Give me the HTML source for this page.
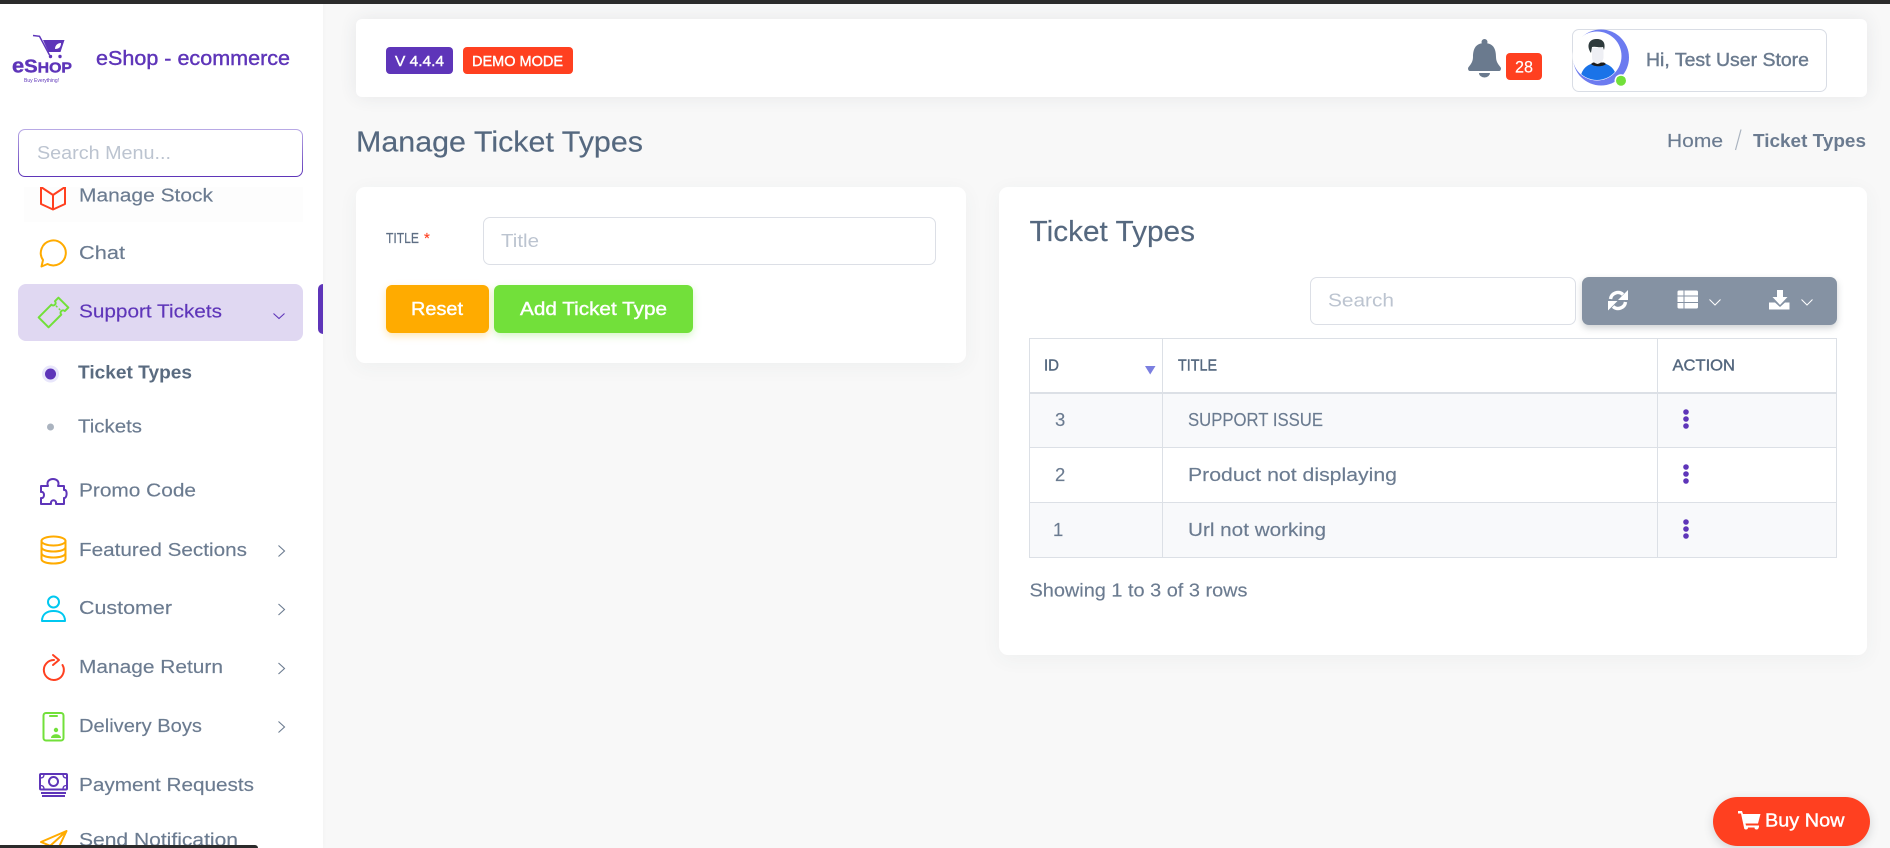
<!DOCTYPE html>
<html lang="en">
<head>
<meta charset="utf-8">
<title>Manage Ticket Types</title>
<style>
html,body{margin:0;padding:0;width:1890px;height:848px;overflow:hidden;background:#f8f8f8;font-family:"Liberation Sans",sans-serif}
.b{position:absolute;box-sizing:border-box}
svg{position:absolute;left:0;top:0}
text{font-family:"Liberation Sans",sans-serif;font-size:18.5px;color:#6b7b90;fill:currentColor;stroke:currentColor;stroke-width:.15px}
.m{stroke-width:.4px}
.w{color:#fff}
.p{color:#bcc4d0;stroke-width:0}
.bd{font-weight:700;stroke-width:0}
.nav{fill:none;stroke-width:2;stroke-linejoin:round;stroke-linecap:round}
.ch{fill:none;stroke:#6b7b90;stroke-width:1.1}
.th{font-size:15.8px;color:#55687f}
</style>
</head>
<body>
<!-- sidebar -->
<div class="b" style="left:0;top:0;width:323px;height:848px;background:#fff;box-shadow:0 0 6px rgba(0,0,0,.03)"></div>
<div class="b" style="left:24px;top:187px;width:279px;height:35px;background:#fdfdfd"></div>
<div class="b" style="left:18px;top:129px;width:285px;height:48px;border:1px solid transparent;border-radius:7px;background:linear-gradient(#fff,#fff) padding-box,linear-gradient(#b9aae6,#5e35b9) border-box"></div>
<div class="b" style="left:18px;top:284px;width:285px;height:57px;background:#e0d8f2;border-radius:8px"></div>
<div class="b" style="left:318px;top:284px;width:5px;height:50px;background:#5e35b9;border-radius:5px 0 0 5px"></div>
<!-- navbar -->
<div class="b" style="left:356px;top:19px;width:1511px;height:78px;background:#fff;border-radius:6px;box-shadow:0 0 18px rgba(60,70,80,.09)"></div>
<div class="b" style="left:386px;top:47px;width:67px;height:27px;background:#5e35b9;border-radius:4px"></div>
<div class="b" style="left:463px;top:47px;width:110px;height:27px;background:#ff4020;border-radius:4px"></div>
<div class="b" style="left:1506px;top:53px;width:36px;height:27px;background:#ff4020;border-radius:4px"></div>
<div class="b" style="left:1572px;top:29px;width:255px;height:63px;border:1px solid #d9dde5;border-radius:7px"></div>
<!-- form card -->
<div class="b" style="left:356px;top:187px;width:610px;height:176px;background:#fff;border-radius:9px;box-shadow:0 4px 20px rgba(60,70,80,.05)"></div>
<div class="b" style="left:483px;top:217px;width:453px;height:48px;background:#fff;border:1px solid #dcdfe6;border-radius:7px"></div>
<div class="b" style="left:386px;top:285px;width:103px;height:48px;background:#ffab00;border-radius:6px;box-shadow:0 3px 8px rgba(255,171,0,.3)"></div>
<div class="b" style="left:494px;top:285px;width:199px;height:48px;background:#72e03a;border-radius:6px;box-shadow:0 3px 8px rgba(114,224,58,.3)"></div>
<!-- table card -->
<div class="b" style="left:999px;top:187px;width:868px;height:468px;background:#fff;border-radius:9px;box-shadow:0 4px 20px rgba(60,70,80,.05)"></div>
<div class="b" style="left:1310px;top:277px;width:266px;height:48px;background:#fff;border:1px solid #dcdfe6;border-radius:7px"></div>
<div class="b" style="left:1582px;top:277px;width:255px;height:48px;background:#8592a3;border-radius:7px;box-shadow:0 3px 7px rgba(60,70,80,.25)"></div>
<!-- table -->
<div class="b" style="left:1029px;top:338px;width:808px;height:220px;border:1px solid #dce0e6;background:#fff"></div>
<div class="b" style="left:1030px;top:394px;width:806px;height:53px;background:#f8f9fb"></div>
<div class="b" style="left:1030px;top:503px;width:806px;height:54px;background:#f8f9fb"></div>
<div class="b" style="left:1030px;top:392px;width:806px;height:2px;background:#dce0e6"></div>
<div class="b" style="left:1030px;top:447px;width:806px;height:1px;background:#dce0e6"></div>
<div class="b" style="left:1030px;top:502px;width:806px;height:1px;background:#dce0e6"></div>
<div class="b" style="left:1162px;top:338px;width:1px;height:220px;background:#dce0e6"></div>
<div class="b" style="left:1657px;top:338px;width:1px;height:220px;background:#dce0e6"></div>
<!-- buy now -->
<div class="b" style="left:1713px;top:797px;width:157px;height:49px;background:#ff4020;border-radius:25px;box-shadow:0 3px 10px rgba(60,70,80,.2)"></div>

<svg width="1890" height="848" viewBox="0 0 1890 848" xmlns="http://www.w3.org/2000/svg">
<defs><clipPath id="mc"><rect x="0" y="187" width="323" height="661"/></clipPath>
<clipPath id="av"><circle cx="1597" cy="56" r="24"/></clipPath></defs>

<!-- logo -->
<g fill="#5e35b9">
<path d="M33 35.500l6.500.8L49.500 55" fill="none" stroke="#5e35b9" stroke-width="1.500"/>
<path d="M43 40H64.500L60.500 52H48.500Z"/>
<circle cx="50.500" cy="56.500" r="1.700"/><circle cx="60" cy="56.500" r="1.700"/>
<path d="M55 49c0-4 3-6 6-6 0 4-2 6-6 6z" fill="#fff"/>
</g>
<text x="12" y="72.700" textLength="60" lengthAdjust="spacingAndGlyphs" style="font-weight:700;font-size:20px;color:#5e35b9;stroke-width:.4px">e<tspan style="font-size:18.500px">S</tspan><tspan style="font-size:14.500px">HOP</tspan></text>
<text x="24" y="82" textLength="35" lengthAdjust="spacingAndGlyphs" style="font-size:5px;color:#5e35b9;stroke-width:0">Buy Everything!</text>
<text class="m" x="96" y="65" textLength="194" lengthAdjust="spacingAndGlyphs" style="font-size:20px;color:#5e35b9">eShop - ecommerce</text>

<!-- sidebar text -->
<text class="p" x="37" y="159" textLength="134" lengthAdjust="spacingAndGlyphs">Search Menu...</text>
<g clip-path="url(#mc)"><path class="nav" stroke="#ff4020" d="M41 187L53 195 65 187V204L53 209.500 41 204ZM53 195V209.500"/></g>
<text x="79" y="201.500" textLength="134" lengthAdjust="spacingAndGlyphs">Manage Stock</text>
<path class="nav" stroke="#ffab00" d="M41.500 266.500L43 260A12.500 12.500 0 1 1 47.500 264Z"/>
<text x="79" y="259" textLength="46" lengthAdjust="spacingAndGlyphs">Chat</text>

<g transform="translate(53.500 312.500) rotate(-45)" class="nav" stroke="#72e03a">
<path d="M-14-7H4a2.500 2.500 0 0 0 5 0H14V7H9a2.500 2.500 0 0 0-5 0H-14Z"/>
<path stroke-width="1.400" stroke-linecap="butt" stroke-dasharray="2 2" d="M6.500-3V4"/>
</g>
<text x="79" y="317.500" textLength="143" lengthAdjust="spacingAndGlyphs" style="color:#5e35b9">Support Tickets</text>
<path class="ch" style="stroke:#5e35b9" d="M273.500 313.500L279 318.500 284.500 313.500"/>

<circle cx="50.500" cy="374" r="8.500" fill="#e8e6fb"/><circle cx="50.500" cy="374" r="5.500" fill="#5e35b9"/>
<text class="bd" x="78" y="378.500" textLength="114" lengthAdjust="spacingAndGlyphs" style="color:#5a6b80">Ticket Types</text>
<circle cx="50.500" cy="427" r="3.500" fill="#aab3bf"/>
<text x="78" y="432.500" textLength="64" lengthAdjust="spacingAndGlyphs">Tickets</text>

<path class="nav" stroke="#5e35b9" d="M41 486H48C46 481 50 479 53 479C56 479 60 481 58 486H64V490C68 489 67 499 64 498V504H56C57 499 50 499 51 504H41V498C45 499 45 491 41 492Z"/>
<text x="79" y="496.500" textLength="117" lengthAdjust="spacingAndGlyphs">Promo Code</text>

<g class="nav" stroke="#ffab00"><ellipse cx="53.500" cy="541" rx="12" ry="4.500"/><path d="M41.500 541V559C41.500 565 65.500 565 65.500 559V541M41.500 547C41.500 553 65.500 553 65.500 547M41.500 553C41.500 559 65.500 559 65.500 553"/></g>
<text x="79" y="556" textLength="168" lengthAdjust="spacingAndGlyphs">Featured Sections</text>
<path class="ch" d="M278.500 545.500L284.500 551 278.500 556.500"/>

<g class="nav" stroke="#00c8f0"><circle cx="53.500" cy="602" r="5.500"/><path d="M42 621C42 614 47 611 53.500 611S65 614 65 621Z"/></g>
<text x="79" y="614" textLength="93" lengthAdjust="spacingAndGlyphs">Customer</text>
<path class="ch" d="M278.500 604L284.500 609.500 278.500 615"/>

<g class="nav" stroke="#ff4020"><path d="M54 660A10 10 0 1 0 62.500 665"/><path d="M53 655L59 660 53 665"/></g>
<text x="79" y="673" textLength="144" lengthAdjust="spacingAndGlyphs">Manage Return</text>
<path class="ch" d="M278.500 663L284.500 668.500 278.500 674"/>

<g class="nav" stroke="#72e03a"><rect x="43.500" y="713" width="20" height="27.500" rx="2.500"/><path d="M50 716H57"/></g>
<circle cx="56" cy="730" r="2.200" fill="#72e03a"/><path d="M51 738C51 733 61 733 61 738Z" fill="#72e03a"/>
<text x="79" y="732" textLength="123" lengthAdjust="spacingAndGlyphs">Delivery Boys</text>
<path class="ch" d="M278.500 721.500L284.500 727 278.500 732.500"/>

<g fill="none" stroke="#5e35b9" stroke-width="2"><rect x="40" y="774" width="27" height="15.500" rx="1"/><circle cx="53.500" cy="781.500" r="4.500"/><path d="M41 793H66M42 796H65"/><path d="M40 778c3 0 4-1 4-4M67 778c-3 0-4-1-4-4M40 785.500c3 0 4 1 4 4M67 785.500c-3 0-4 1-4 4" stroke-width="1.300"/></g>
<text x="79" y="791" textLength="175" lengthAdjust="spacingAndGlyphs">Payment Requests</text>

<path class="nav" stroke="#ffab00" d="M41 842L66.500 831 58 849ZM66.500 831L50 846V851"/>
<text x="79" y="846" textLength="159" lengthAdjust="spacingAndGlyphs">Send Notification</text>

<!-- navbar content -->
<text class="m w" x="395" y="66" textLength="49" lengthAdjust="spacingAndGlyphs" style="font-size:15px">V 4.4.4</text>
<text class="m w" x="472" y="66" textLength="91" lengthAdjust="spacingAndGlyphs" style="font-size:15px">DEMO MODE</text>
<g fill="#6a7a8e"><circle cx="1484.500" cy="42" r="3"/><path d="M1484.500 43C1475 43 1473 50 1473 57C1473 63 1469 66 1468 68Q1468 71 1470 71H1499Q1501 71 1501 68C1500 66 1496 63 1496 57C1496 50 1494 43 1484.500 43Z"/><path d="M1479 73H1490A5.500 4.500 0 0 1 1479 73Z"/></g>
<text class="w" x="1515" y="72.500" textLength="18" lengthAdjust="spacingAndGlyphs" style="font-size:16.500px">28</text>

<circle cx="1601" cy="57.500" r="28" fill="#6c7bf0"/>
<circle cx="1597" cy="56" r="24.500" fill="#fff"/>
<g clip-path="url(#av)">
<path d="M1580 82C1580 70 1587 64.500 1593 63.500H1604C1610 64.500 1617 70 1617 82Z" fill="#1a73e8"/>
<path d="M1591 64C1594 67 1603 67 1606 64L1604 62.500H1593Z" fill="#1c1c1c"/>
<path d="M1592 48H1603.500V57C1603.500 60 1602 63 1597.500 64 1593 63 1592 60 1592 57Z" fill="#eeeff4"/>
<path d="M1591 53C1586 46 1589 39 1596 39 1603 38.500 1606 43 1604 50L1603 47C1599 48 1595 46 1592 47Z" fill="#2e3a3c"/>
</g>
<circle cx="1621" cy="80.700" r="6.500" fill="#fff"/><circle cx="1621" cy="80.700" r="5" fill="#72e03a"/>
<text class="m" x="1646" y="66" textLength="163" lengthAdjust="spacingAndGlyphs" style="color:#6a7a8e">Hi, Test User Store</text>

<!-- page header -->
<text x="356" y="151.500" textLength="287" lengthAdjust="spacingAndGlyphs" style="font-size:28.500px;color:#55687f">Manage Ticket Types</text>
<text x="1667" y="147" textLength="56" lengthAdjust="spacingAndGlyphs">Home</text>
<path d="M1741 129.500L1735.500 150" stroke="#aab3bf" stroke-width="1.200" fill="none"/>
<text class="bd" x="1753" y="147" textLength="113" lengthAdjust="spacingAndGlyphs">Ticket Types</text>

<!-- form -->
<text class="m" x="386" y="243" textLength="33" lengthAdjust="spacingAndGlyphs" style="font-size:15px;color:#5f6f85;stroke-width:.2px">TITLE</text>
<text x="424" y="243" style="font-size:15px;color:#ff4020">*</text>
<text class="p" x="501" y="247" textLength="38" lengthAdjust="spacingAndGlyphs">Title</text>
<text class="m w" x="411" y="315" textLength="52" lengthAdjust="spacingAndGlyphs">Reset</text>
<text class="m w" x="520" y="315" textLength="147" lengthAdjust="spacingAndGlyphs">Add Ticket Type</text>

<!-- table card -->
<text x="1029.500" y="241" textLength="165.500" lengthAdjust="spacingAndGlyphs" style="font-size:28.500px;color:#55687f">Ticket Types</text>
<text class="p" x="1328" y="306.500" textLength="66" lengthAdjust="spacingAndGlyphs">Search</text>

<g fill="#fff">
<path d="M1610.500 299A7.500 7.500 0 0 1 1623 294.500" fill="none" stroke="#fff" stroke-width="3.400"/>
<path d="M1628 290V300H1618Z"/>
<path d="M1625.500 302A7.500 7.500 0 0 1 1613 306.500" fill="none" stroke="#fff" stroke-width="3.400"/>
<path d="M1608 310.500V301H1617.500Z"/>
<rect x="1677.500" y="290.500" width="20.500" height="18" rx="1.500"/>
<path d="M1780 290V298" stroke="#fff" stroke-width="6"/>
<path d="M1772.500 297H1787.500L1780 305Z"/>
<path d="M1769 302.500H1775L1780 307 1785 302.500H1789.500V309.500H1769Z"/>
</g>
<path d="M1677.500 296H1698M1677.500 302.500H1698M1684 290.500V308.500" stroke="#8592a3" stroke-width="1"/>
<path class="ch" style="stroke:#fff;stroke-width:1" d="M1709.500 299.500L1715 305 1720.500 299.500M1801.500 299.500L1807 305 1812.500 299.500"/>

<text class="th m" x="1044" y="370.500" textLength="15" lengthAdjust="spacingAndGlyphs">ID</text>
<path d="M1145 366H1155.500L1150.200 374.500Z" fill="#7b7fe0"/>
<text class="th m" x="1178" y="370.500" textLength="39" lengthAdjust="spacingAndGlyphs">TITLE</text>
<text class="th m" x="1672.500" y="370.500" textLength="62.500" lengthAdjust="spacingAndGlyphs">ACTION</text>

<text x="1055" y="426">3</text>
<text x="1188" y="426" textLength="135" lengthAdjust="spacingAndGlyphs">SUPPORT ISSUE</text>
<text x="1055" y="481">2</text>
<text x="1188" y="481" textLength="209" lengthAdjust="spacingAndGlyphs">Product not displaying</text>
<text x="1053" y="536">1</text>
<text x="1188" y="536" textLength="138" lengthAdjust="spacingAndGlyphs">Url not working</text>
<g fill="#5e35b9">
<circle cx="1686" cy="412" r="2.800"/><circle cx="1686" cy="419" r="2.800"/><circle cx="1686" cy="426" r="2.800"/>
<circle cx="1686" cy="467" r="2.800"/><circle cx="1686" cy="474" r="2.800"/><circle cx="1686" cy="481" r="2.800"/>
<circle cx="1686" cy="522" r="2.800"/><circle cx="1686" cy="529" r="2.800"/><circle cx="1686" cy="536" r="2.800"/>
</g>
<text x="1029.500" y="596.500" textLength="218" lengthAdjust="spacingAndGlyphs">Showing 1 to 3 of 3 rows</text>

<!-- buy now -->
<g fill="#fff"><path d="M1738 811H1742L1743 814H1760.500L1758 823.500H1745.500L1746 825.500H1759V827.500H1744L1741 813.500H1738Z"/><circle cx="1746" cy="827.500" r="2"/><circle cx="1756.500" cy="827.500" r="2"/></g>
<text class="m w" x="1765" y="826.500" textLength="79.500" lengthAdjust="spacingAndGlyphs">Buy Now</text>
</svg>

<div class="b" style="left:0;top:0;width:1890px;height:4px;background:#2b2b2b"></div>
<div class="b" style="left:0;top:845px;width:258px;height:3px;background:#2b2b2b;border-radius:0 3px 0 0"></div>
</body>
</html>
